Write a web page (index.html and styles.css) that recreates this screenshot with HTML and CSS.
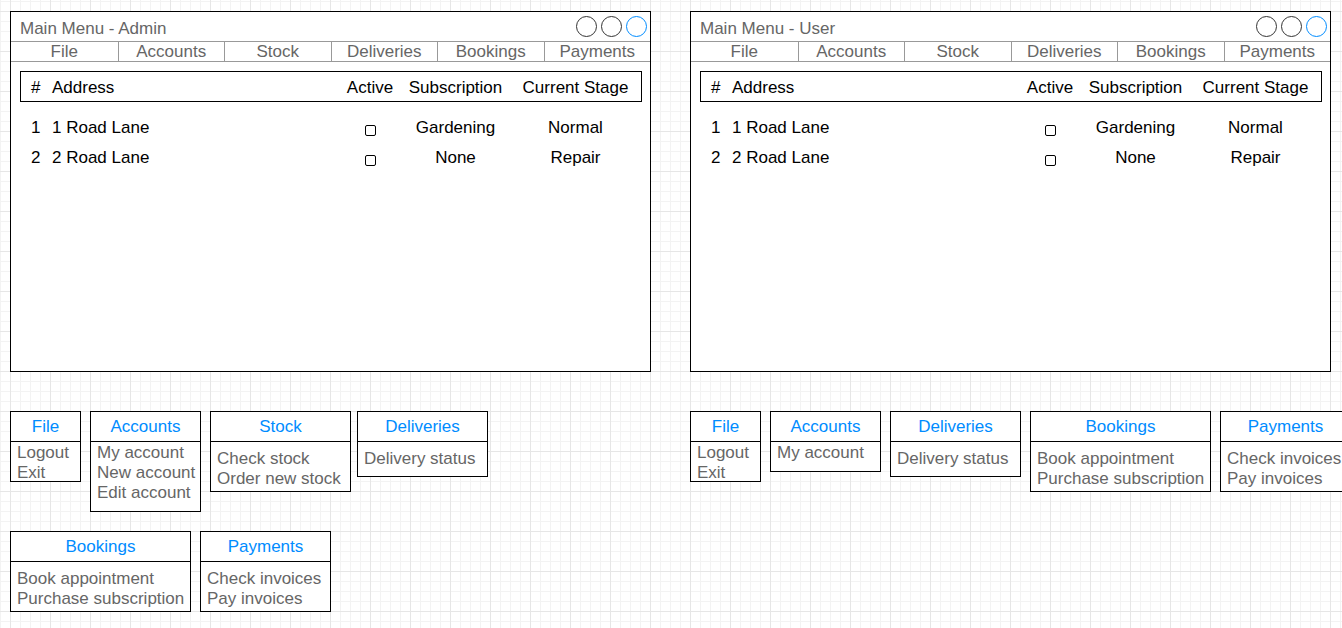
FILE: index.html
```html
<!DOCTYPE html>
<html lang="en">
<head>
    <meta charset="UTF-8">
    <title>Main Menu Wireframes</title>
    <link rel="stylesheet" href="styles.css">
</head>
<body>
    <div class="board">
        <!-- Admin -->
        <section class="column">
            <div class="window">
                <div class="window-title">
                    <span>Main Menu - Admin</span>
                    <div class="window-controls">
                        <span class="dot"></span>
                        <span class="dot"></span>
                        <span class="dot dot-blue"></span>
                    </div>
                </div>
                <nav class="menubar">
                    <span>File</span>
                    <span>Accounts</span>
                    <span>Stock</span>
                    <span>Deliveries</span>
                    <span>Bookings</span>
                    <span>Payments</span>
                </nav>
                <div class="window-body">
                    <div class="table-head cols">
                        <span>#</span>
                        <span>Address</span>
                        <span class="center">Active</span>
                        <span class="center">Subscription</span>
                        <span class="center">Current Stage</span>
                    </div>
                    <div class="table-rows">
                        <div class="table-row cols">
                            <span>1</span>
                            <span>1 Road Lane</span>
                            <span class="center check-cell"><i class="checkbox"></i></span>
                            <span class="center">Gardening</span>
                            <span class="center">Normal</span>
                        </div>
                        <div class="table-row cols">
                            <span>2</span>
                            <span>2 Road Lane</span>
                            <span class="center check-cell"><i class="checkbox"></i></span>
                            <span class="center">None</span>
                            <span class="center">Repair</span>
                        </div>
                    </div>
                </div>
            </div>

            <div class="menus">
                <div class="menu-row">
                    <div class="panel panel-file">
                        <div class="panel-head">File</div>
                        <div class="panel-body">Logout<br>Exit</div>
                    </div>
                    <div class="panel panel-accounts-admin">
                        <div class="panel-head">Accounts</div>
                        <div class="panel-body">My account<br>New account<br>Edit account</div>
                    </div>
                    <div class="panel panel-stock">
                        <div class="panel-head">Stock</div>
                        <div class="panel-body padded">Check stock<br>Order new stock</div>
                    </div>
                    <div class="panel panel-deliveries tight">
                        <div class="panel-head">Deliveries</div>
                        <div class="panel-body padded">Delivery status</div>
                    </div>
                </div>
                <div class="menu-row second">
                    <div class="panel panel-bookings">
                        <div class="panel-head">Bookings</div>
                        <div class="panel-body padded">Book appointment<br>Purchase subscription</div>
                    </div>
                    <div class="panel panel-payments">
                        <div class="panel-head">Payments</div>
                        <div class="panel-body padded">Check invoices<br>Pay invoices</div>
                    </div>
                </div>
            </div>
        </section>

        <!-- User -->
        <section class="column">
            <div class="window">
                <div class="window-title">
                    <span>Main Menu - User</span>
                    <div class="window-controls">
                        <span class="dot"></span>
                        <span class="dot"></span>
                        <span class="dot dot-blue"></span>
                    </div>
                </div>
                <nav class="menubar">
                    <span>File</span>
                    <span>Accounts</span>
                    <span>Stock</span>
                    <span>Deliveries</span>
                    <span>Bookings</span>
                    <span>Payments</span>
                </nav>
                <div class="window-body">
                    <div class="table-head cols">
                        <span>#</span>
                        <span>Address</span>
                        <span class="center">Active</span>
                        <span class="center">Subscription</span>
                        <span class="center">Current Stage</span>
                    </div>
                    <div class="table-rows">
                        <div class="table-row cols">
                            <span>1</span>
                            <span>1 Road Lane</span>
                            <span class="center check-cell"><i class="checkbox"></i></span>
                            <span class="center">Gardening</span>
                            <span class="center">Normal</span>
                        </div>
                        <div class="table-row cols">
                            <span>2</span>
                            <span>2 Road Lane</span>
                            <span class="center check-cell"><i class="checkbox"></i></span>
                            <span class="center">None</span>
                            <span class="center">Repair</span>
                        </div>
                    </div>
                </div>
            </div>

            <div class="menus">
                <div class="menu-row nowrap">
                    <div class="panel panel-file">
                        <div class="panel-head">File</div>
                        <div class="panel-body">Logout<br>Exit</div>
                    </div>
                    <div class="panel panel-accounts-user">
                        <div class="panel-head">Accounts</div>
                        <div class="panel-body">My account</div>
                    </div>
                    <div class="panel panel-deliveries">
                        <div class="panel-head">Deliveries</div>
                        <div class="panel-body padded">Delivery status</div>
                    </div>
                    <div class="panel panel-bookings">
                        <div class="panel-head">Bookings</div>
                        <div class="panel-body padded">Book appointment<br>Purchase subscription</div>
                    </div>
                    <div class="panel panel-payments">
                        <div class="panel-head">Payments</div>
                        <div class="panel-body padded">Check invoices<br>Pay invoices</div>
                    </div>
                </div>
            </div>
        </section>
    </div>
</body>
</html>
```

FILE: styles.css
```css
html {
    background-color: #fff;
    background-image:
        linear-gradient(#e6e6e6 1px, transparent 1px),
        linear-gradient(90deg, #e6e6e6 1px, transparent 1px),
        linear-gradient(#f3f3f3 1px, transparent 1px),
        linear-gradient(90deg, #f3f3f3 1px, transparent 1px);
    background-size: 40px 40px, 40px 40px, 10px 10px, 10px 10px;
    background-position: 0 11px, 10px 0, 0 1px, 0 0;
    min-height: 100%;
}

body {
    margin: 0;
    padding: 11px 0 0 10px;
    font-family: 'Liberation Sans', Arial, sans-serif;
    font-size: 17px;
    color: #000;
    overflow: hidden;
    height: 617px;
}

.board {
    display: grid;
    grid-template-columns: 641px 641px;
    column-gap: 39px;
}

/* Window mockup */
.window {
    box-sizing: border-box;
    width: 641px;
    height: 361px;
    border: 1px solid #000;
    background: #fff;
}

.window-title {
    display: flex;
    justify-content: space-between;
    align-items: flex-start;
    height: 29px;
    box-sizing: border-box;
    padding: 7px 3px 0 9px;
    line-height: 20px;
    color: #666;
}

.window-controls {
    display: flex;
    gap: 4px;
    margin-top: -3px;
}

.dot {
    box-sizing: border-box;
    width: 21px;
    height: 21px;
    border: 1px solid #333;
    border-radius: 50%;
}

.dot-blue {
    border-color: #008cff;
}

.menubar {
    display: grid;
    grid-template-columns: repeat(6, 1fr);
    border-top: 1px solid #999;
    border-bottom: 1px solid #999;
    color: #666;
    line-height: 19px;
    text-align: center;
}

.menubar span + span {
    border-left: 1px solid #999;
}

.window-body {
    padding: 9px 8px 0 9px;
}

.cols {
    display: grid;
    grid-template-columns: 21px 288px 60px 111px 129px;
}

.table-head {
    box-sizing: border-box;
    height: 31px;
    padding: 2px 0 0 10px;
    border: 1px solid #000;
    line-height: 27px;
}

.table-rows {
    margin-top: 11px;
}

.table-row {
    padding-left: 11px;
    line-height: 30px;
}

.center {
    text-align: center;
}

.check-cell {
    display: flex;
    justify-content: center;
    align-items: center;
}

.checkbox {
    box-sizing: border-box;
    width: 11px;
    height: 11px;
    margin-top: 4px;
    border: 1px solid #000;
    border-radius: 2px;
}

/* Menu panels */
.menus {
    margin-top: 39px;
}

.menu-row {
    display: flex;
    align-items: flex-start;
    gap: 9px;
}

.menu-row.second {
    margin-top: 19px;
}

.panel {
    box-sizing: border-box;
    flex: none;
    border: 1px solid #000;
    background: #fff;
}

.panel.tight {
    margin-left: -3px;
}

.panel-head {
    box-sizing: border-box;
    height: 30px;
    border-bottom: 1px solid #000;
    line-height: 29px;
    text-align: center;
    color: #008cff;
}

.panel-body {
    padding: 1px 6px 0;
    line-height: 20px;
    color: #666;
    white-space: nowrap;
}

.panel-body.padded {
    padding-top: 7px;
}

.panel-file { width: 71px; height: 71px; }
.panel-accounts-admin { width: 111px; height: 101px; }
.panel-accounts-user { width: 111px; height: 61px; }
.panel-stock { width: 141px; height: 81px; }
.panel-deliveries { width: 131px; height: 66px; }
.panel-bookings { width: 181px; height: 81px; }
.panel-payments { width: 131px; height: 81px; }
```
